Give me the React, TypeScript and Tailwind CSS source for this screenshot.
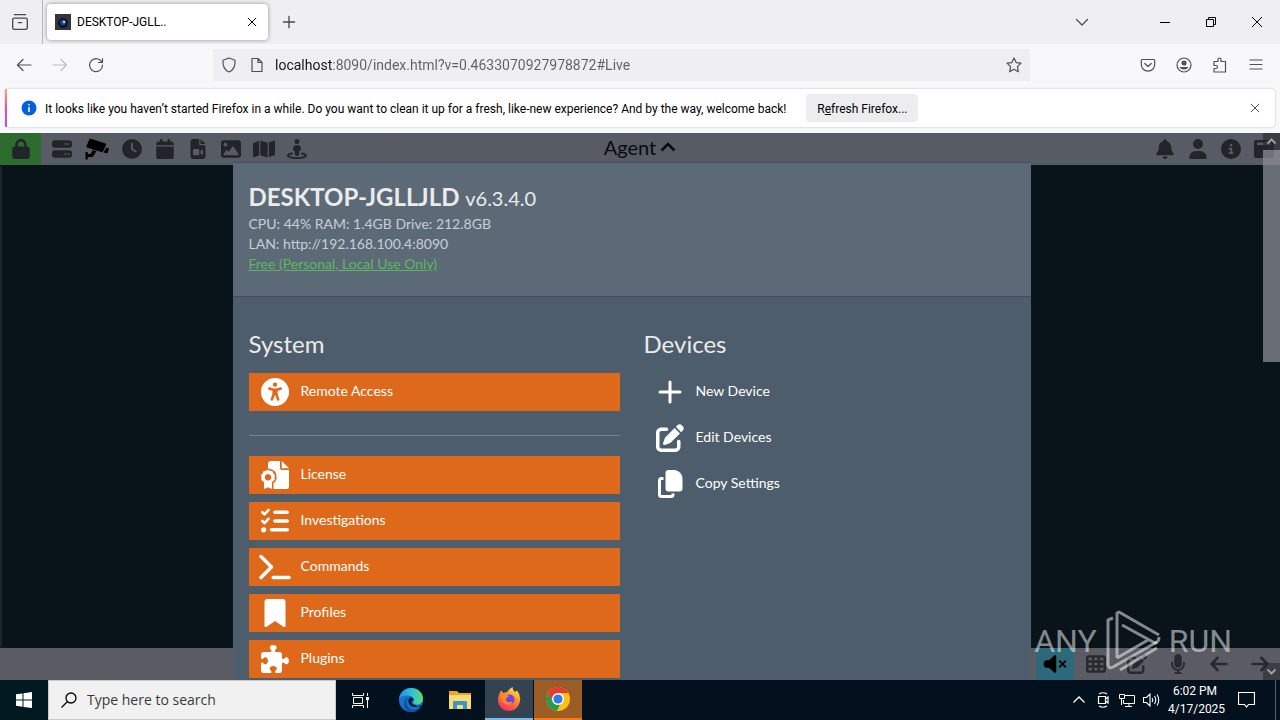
import type { ReactNode } from "react";
import type { IconType } from "react-icons";
import {
  FaArrowLeft,
  FaArrowRight,
  FaBell,
  FaBookmark,
  FaCalendar,
  FaCircleInfo,
  FaClock,
  FaFileVideo,
  FaImage,
  FaListCheck,
  FaLock,
  FaMap,
  FaMicrophone,
  FaPenToSquare,
  FaPuzzlePiece,
  FaServer,
  FaStreetView,
  FaTableCells,
  FaTerminal,
  FaUniversalAccess,
  FaUser,
  FaVolumeXmark,
} from "react-icons/fa6";

interface SvgProps {
  className?: string;
}

interface MenuItem {
  label: string;
  icon: IconType | ((props: SvgProps) => ReactNode);
}

function CctvIcon({ className }: SvgProps) {
  return (
    <svg viewBox="0 0 24 22" className={className} fill="currentColor">
      <path d="M4.500 1 Q5.500 .5 6.500 1 L20.500 5.500 Q21.500 6 21 7 L18 13.500 Q17.500 14.500 16.500 14 L2 9.500 Q1 9 1.500 8 Z" />
      <path d="M21.500 9.500 L24 10.500 L22.500 15.500 L18.500 14.500 Z" />
      <path d="M.5 14 h2.200 v2 h2.800 l2.400 -4 l3.600 1.200 l-3.800 5.800 h-5 v2.500 H.5 Z" />
    </svg>
  );
}

function WindowIcon({ className }: SvgProps) {
  return (
    <svg viewBox="0 0 20 18" className={className} fill="currentColor" fillRule="evenodd">
      <path d="M2 0 H18 a2 2 0 0 1 2 2 V16 a2 2 0 0 1 -2 2 H2 a2 2 0 0 1 -2 -2 V2 a2 2 0 0 1 2 -2 Z M3 2.500 V5 H17 V2.500 Z" />
    </svg>
  );
}

function PlusIcon({ className }: SvgProps) {
  return (
    <svg viewBox="0 0 28 28" className={className} stroke="currentColor" strokeWidth="3" strokeLinecap="round">
      <path d="M14 4 V24 M4 14 H24" />
    </svg>
  );
}

function CertificateIcon({ className }: SvgProps) {
  return (
    <svg viewBox="0 0 28 28" className={className} fill="currentColor" fillRule="evenodd">
      <path d="M7 7.500 V3 a3 3 0 0 1 3 -3 H19 V7 a2 2 0 0 0 2 2 H28 V25.500 a2.500 2.500 0 0 1 -2.500 2.500 H12.500 V22 Q16 20 15.500 16 Q15.500 9 9.500 8 Z M20.800 0 L28 7.200 H20.800 Z" />
      <path d="M7 8.800 L9.200 9.800 L11.600 10.200 L12.400 12.400 L14 14.200 L13.500 16.500 L13.800 18.900 L11.800 20.200 L11 21.500 V28 L7 26.200 L3 28 V21.500 L2.200 20.200 L.2 18.900 L.5 16.500 L0 14.200 L1.600 12.400 L2.400 10.200 L4.800 9.800 Z M7 13 a3.300 3.300 0 1 0 .01 0 Z" />
    </svg>
  );
}

function CopyIcon({ className }: SvgProps) {
  return (
    <svg viewBox="0 0 28 28" className={className} fill="currentColor">
      <path d="M12.500 0 H19 Q26.500 2 26.500 9 V18.500 a3 3 0 0 1 -3 3 H12.500 a3 3 0 0 1 -3 -3 V3 a3 3 0 0 1 3 -3 Z" />
      <path
        d="M7.500 8.500 H5.500 a2 2 0 0 0 -2 2 V24.500 a2 2 0 0 0 2 2 H15 a2 2 0 0 0 2 -2 V23.500"
        fill="none"
        stroke="currentColor"
        strokeWidth="3"
      />
    </svg>
  );
}

function LineIcon({ className, children }: SvgProps & { children: ReactNode }) {
  return (
    <svg
      viewBox="0 0 16 16"
      className={className}
      fill="none"
      stroke="currentColor"
      strokeWidth="1.200"
      strokeLinecap="round"
      strokeLinejoin="round"
    >
      {children}
    </svg>
  );
}

function CloseIcon({ className }: SvgProps) {
  return (
    <LineIcon className={className}>
      <path d="M4.200 4.200 L11.800 11.800 M11.800 4.200 L4.200 11.800" strokeWidth="1" />
    </LineIcon>
  );
}

function TabBar() {
  return (
    <div className="flex h-11 shrink-0 items-center bg-[#efeef3] text-[#4a4a52]">
      <button aria-label="Recent browsing" className="flex h-full w-[43px] items-center justify-center border-r border-[#b9b9bf] pr-0.5">
        <LineIcon className="size-[18px]">
          <path d="M3 1.500 H13 M3 4.500 H13 a1.500 1.500 0 0 1 1.500 1.500 V13 a1.500 1.500 0 0 1 -1.500 1.500 H3 A1.500 1.500 0 0 1 1.500 13 V6 A1.500 1.500 0 0 1 3 4.500 Z M6.500 8.500 H9.500" />
        </LineIcon>
      </button>
      <div className="ml-1 flex h-9 w-[221px] items-center rounded bg-white px-2 text-black shadow-[0_0_4px_rgba(0,0,0,0.4)]">
        <svg viewBox="0 0 16 16" className="size-4">
          <rect width="16" height="16" fill="#34343a" />
          <circle cx="8" cy="9" r="5" fill="#10131f" />
          <circle cx="8" cy="8.500" r="3" fill="#1c3f8f" />
          <circle cx="9" cy="8" r="1.200" fill="#b8d4ff" />
        </svg>
        <span className="ml-1.5 flex-1 font-[Roboto] text-xs">DESKTOP-JGLL..</span>
        <button aria-label="Close tab">
          <CloseIcon className="size-4" />
        </button>
      </div>
      <button aria-label="New tab" className="ml-3">
        <LineIcon className="size-[18px]">
          <path d="M8 3 V13 M3 8 H13" />
        </LineIcon>
      </button>
      <button aria-label="List all tabs" className="ml-auto">
        <LineIcon className="size-4">
          <path d="M2.500 5.500 L8 11 L13.500 5.500" />
        </LineIcon>
      </button>
      <div className="ml-13 flex text-black">
        <button aria-label="Minimize" className="flex w-[46px] justify-center">
          <svg viewBox="0 0 10 10" className="size-2.5" stroke="currentColor">
            <path d="M0 5.500 H10" />
          </svg>
        </button>
        <button aria-label="Restore" className="flex w-[46px] justify-center">
          <svg viewBox="0 0 10 10" className="size-2.5" fill="none" stroke="currentColor">
            <path d="M.5 2.500 H7.500 V9.500 H.5 Z M2.500 2.500 V.5 H9.500 V7.500 H7.500" />
          </svg>
        </button>
        <button aria-label="Close window" className="flex w-[46px] justify-center">
          <svg viewBox="0 0 10 10" className="size-2.5" stroke="currentColor">
            <path d="M0 0 L10 10 M10 0 L0 10" />
          </svg>
        </button>
      </div>
    </div>
  );
}

function NavBar() {
  return (
    <div className="flex h-[42px] shrink-0 items-center bg-[#f8f8fb] pr-4 text-[#4f4f57]">
      <div className="flex w-[213px] gap-5 pl-4">
        <button aria-label="Back">
          <LineIcon className="size-4">
            <path d="M15 8 H1.500 M7 2.500 L1.500 8 L7 13.500" />
          </LineIcon>
        </button>
        <button aria-label="Forward" disabled className="text-[#bdbdc2]">
          <LineIcon className="size-4">
            <path d="M1 8 H14.500 M9 2.500 L14.500 8 L9 13.500" />
          </LineIcon>
        </button>
        <button aria-label="Reload">
          <LineIcon className="size-4">
            <path d="M14.500 8 A6.500 6.500 0 1 1 12 3 L14.500 5.500 M14.500 1.500 V5.500 H10.500" />
          </LineIcon>
        </button>
      </div>
      <div className="flex h-8 w-[817px] items-center bg-[#efeff3] px-2">
        <LineIcon className="size-4">
          <path d="M8 1 L14 3.200 C14.500 9 12.500 13 8 15 C3.500 13 1.500 9 2 3.200 Z" />
        </LineIcon>
        <LineIcon className="ml-3 size-4">
          <path d="M3 1.500 H9 L13 5.500 V14.500 H3 Z M9 1.500 V5.500 H13" />
        </LineIcon>
        {/* the host is darker than the rest of the address */}
        <input
          aria-label="Address"
          readOnly
          value="localhost:8090/index.html?v=0.4633070927978872#Live"
          className="ml-2.5 min-w-0 flex-1 bg-[linear-gradient(to_right,#15141a_57px,#5f5f6a_57px)] bg-clip-text font-[Roboto] text-sm text-transparent outline-none"
        />
        <button aria-label="Bookmark this page">
          <LineIcon className="size-4">
            <path d="M8 1 L10.200 5.600 L15 6.200 L11.500 9.700 L12.300 14.800 L8 12.300 L3.700 14.800 L4.500 9.700 L1 6.200 L5.800 5.600 Z" />
          </LineIcon>
        </button>
      </div>
      <div className="flex flex-1 justify-end gap-5">
        <button aria-label="Save to Pocket">
          <LineIcon className="size-4">
            <path d="M2 2.500 H14 L14.700 3.500 V7.500 A6.700 6.700 0 0 1 1.300 7.500 V3.500 Z M4.800 6.500 L8 9.500 L11.200 6.500" />
          </LineIcon>
        </button>
        <button aria-label="Account">
          <LineIcon className="size-4">
            <circle cx="8" cy="8" r="7" />
            <circle cx="8" cy="6" r="2" fill="currentColor" />
            <path d="M4.500 10.500 H11.500 Q8 13.500 4.500 10.500 Z" fill="currentColor" />
          </LineIcon>
        </button>
        <button aria-label="Extensions">
          <LineIcon className="size-4">
            <path d="M2 4.500 H6 V2.500 a1.500 1.500 0 0 1 3 0 V4.500 H13.500 V15 H2 V11.500 H4 a1.500 1.500 0 0 0 0 -3 H2 Z" />
          </LineIcon>
        </button>
        <button aria-label="Menu">
          <LineIcon className="size-4">
            <path d="M2 3 H14 M2 7.500 H14 M2 12 H14" />
          </LineIcon>
        </button>
      </div>
    </div>
  );
}

function Notification() {
  return (
    <div className="h-[47px] shrink-0 bg-[#f8f8fb] px-[5px] pt-[3px]">
      <div className="flex h-[38px] items-center rounded bg-white pr-3 text-black shadow-[0_0_2px_rgba(0,0,0,0.3)]">
        <span className="h-full w-0.5 bg-linear-to-b from-[#ffa26b] via-[#e0529c] to-[#9059ff]" />
        <svg viewBox="0 0 16 16" className="ml-3.5 size-4">
          <circle cx="8" cy="8" r="7.500" fill="#0560df" />
          <path d="M8 7 V12 M8 4 V5.500" stroke="#fff" strokeWidth="1.500" />
        </svg>
        <p className="ml-2 pt-0.5 font-[Roboto] text-xs whitespace-nowrap">
          It looks like you haven’t started Firefox in a while. Do you want to clean it up for a fresh, like-new
          experience? And by the way, welcome back!
        </p>
        <button className="ml-5 h-7 w-28 rounded bg-[#ededf0] pt-0.5 font-[Roboto] text-xs">
          R<u>e</u>fresh Firefox...
        </button>
        <button aria-label="Dismiss" className="ml-auto text-[#4f4f57]">
          <CloseIcon className="size-4" />
        </button>
      </div>
    </div>
  );
}

const viewTabs = [
  { label: "Devices", icon: FaServer },
  { label: "Live", icon: CctvIcon, active: true },
  { label: "Timeline", icon: FaClock },
  { label: "Calendar", icon: FaCalendar },
  { label: "Recordings", icon: FaFileVideo },
  { label: "Photos", icon: FaImage },
  { label: "Map", icon: FaMap },
  { label: "Floor plan", icon: FaStreetView },
];

const statusButtons = [
  { label: "Notifications", icon: FaBell },
  { label: "Profile", icon: FaUser },
  { label: "Information", icon: FaCircleInfo },
  { label: "Windows", icon: WindowIcon },
];

const liveControls = [
  { label: "Layout", icon: FaTableCells },
  { label: "Edit", icon: FaPenToSquare },
  { label: "Talk", icon: FaMicrophone },
  { label: "Previous", icon: FaArrowLeft },
  { label: "Next", icon: FaArrowRight },
];

function AppHeader() {
  return (
    <header className="flex h-8 shrink-0 items-center justify-between bg-[#575b64] text-[#212529]">
      <nav className="flex h-full flex-1 items-center">
        <button aria-label="Lock" className="flex h-full w-[41px] items-center justify-center bg-[#2c6a2e]">
          <FaLock className="size-5" />
        </button>
        <div className="ml-2.5 flex items-center gap-[11px]">
          {viewTabs.map(({ label, icon: Icon, active }) => (
            <button
              key={label}
              aria-label={label}
              className={active ? "flex w-[26px] justify-center text-black" : "flex w-[22px] justify-center"}
            >
              <Icon className={active ? "h-[22px] w-6" : "h-5 w-[22px]"} />
            </button>
          ))}
        </div>
      </nav>
      <button className="flex items-center gap-1 pb-1 pl-1.5 font-[Lato] text-xl leading-none text-[#080b10]">
        Agent
        <svg viewBox="0 0 16 10" className="h-2.5 w-4" fill="none" stroke="currentColor" strokeWidth="2.500">
          <path d="M1.500 8.500 L8 2 L14.500 8.500" />
        </svg>
      </button>
      <div className="flex flex-1 justify-end gap-[13px] pr-1.5">
        {statusButtons.map(({ label, icon: Icon }) => (
          <button key={label} aria-label={label}>
            <Icon className="size-5" />
          </button>
        ))}
      </div>
    </header>
  );
}

function LiveToolbar() {
  return (
    <footer className="flex h-8 shrink-0 items-center justify-end bg-[#5b5c63] text-[#26292e]">
      <button aria-label="Unmute" className="flex h-full w-[38px] items-center justify-center bg-[#2c6a7b] text-black">
        <FaVolumeXmark className="h-5 w-6" />
      </button>
      <div className="flex gap-[21px] pr-2.5 pl-3">
        {liveControls.map(({ label, icon: Icon }) => (
          <button key={label} aria-label={label}>
            <Icon className="size-5" />
          </button>
        ))}
      </div>
    </footer>
  );
}

const systemItems: MenuItem[] = [
  { label: "License", icon: CertificateIcon },
  { label: "Investigations", icon: FaListCheck },
  { label: "Commands", icon: FaTerminal },
  { label: "Profiles", icon: FaBookmark },
  { label: "Plugins", icon: FaPuzzlePiece },
];

const deviceItems: MenuItem[] = [
  { label: "New Device", icon: PlusIcon },
  { label: "Edit Devices", icon: FaPenToSquare },
  { label: "Copy Settings", icon: CopyIcon },
];

function MenuButton({ item, filled }: { item: MenuItem; filled?: boolean }) {
  const Icon = item.icon;
  return (
    <button
      className={
        filled
          ? "flex h-[38px] w-full shrink-0 items-center bg-[#df691a] text-left text-white"
          : "flex h-[38px] w-full shrink-0 items-center text-left text-white"
      }
    >
      <span className="flex w-[52px] justify-center">
        <Icon className="h-7 w-8" />
      </span>
      <span className="pb-0.5 text-sm">{item.label}</span>
    </button>
  );
}

function AgentDialog() {
  return (
    <div role="dialog" aria-label="Agent" className="h-full w-[798px] overflow-hidden bg-[#4e5d6c] font-[Lato] text-[#ebebeb]">
      <div className="h-[135px] border-y border-[#43515e] bg-[#5c6a78] px-4 pt-[18px]">
        <h1 className="mb-px text-2xl leading-8 font-bold">
          DESKTOP-JGLLJLD <span className="text-xl font-normal">v6.3.4.0</span>
        </h1>
        <div className="text-sm leading-5 text-[#c8ced4]">
          <p>CPU: 44% RAM: 1.4GB Drive: 212.8GB</p>
          <p>LAN: http://192.168.100.4:8090</p>
          <a href="#license" className="text-[#5cb85c] underline">
            Free (Personal, Local Use Only)
          </a>
        </div>
      </div>
      <div className="grid grid-cols-2 gap-6 px-4 pt-[31px]">
        <section>
          <h2 className="text-2xl leading-8">System</h2>
          <div className="mt-[13px]">
            <MenuButton item={{ label: "Remote Access", icon: FaUniversalAccess }} filled />
          </div>
          <hr className="mt-6 mb-5 border-[#74818e]" />
          <div className="flex flex-col gap-2">
            {systemItems.map((item) => (
              <MenuButton key={item.label} item={item} filled />
            ))}
          </div>
        </section>
        <section>
          <h2 className="text-2xl leading-8">Devices</h2>
          <div className="mt-[13px] flex flex-col gap-2">
            {deviceItems.map((item) => (
              <MenuButton key={item.label} item={item} />
            ))}
          </div>
        </section>
      </div>
    </div>
  );
}

function Scrollbar() {
  return (
    <div className="flex w-[17px] flex-col text-[#9a9da1]">
      <svg viewBox="0 0 17 17" className="size-[17px] bg-[#25282d]/60" fill="none" stroke="currentColor" strokeWidth="2">
        <path d="M4.500 10.500 L8.500 6.500 L12.500 10.500" />
      </svg>
      <div className="h-[212px] bg-[#8a8c96]/75" />
      <svg viewBox="0 0 17 17" className="mt-auto size-[17px] bg-[#25282d]/60" fill="none" stroke="currentColor" strokeWidth="2">
        <path d="M4.500 6.500 L8.500 10.500 L12.500 6.500" />
      </svg>
    </div>
  );
}

function Watermark() {
  return (
    <div className="absolute right-12 bottom-2 flex items-center gap-2 font-[Roboto] text-[32px] text-white/50">
      <span>ANY</span>
      <svg viewBox="0 0 56 62" className="h-[62px] w-14" fill="none" stroke="currentColor" strokeWidth="3" strokeLinejoin="round">
        <path d="M8 8 L3 10 V55 Q4 59 8 57 L52 32" />
        <path d="M12 48 V3 L14 2 L54 25 M17 15 L50 33 Q54 32 54 27 M12 48 L43 30 M15 60 L52 38" />
      </svg>
      <span>RUN</span>
    </div>
  );
}

function EdgeLogo() {
  return (
    <svg viewBox="0 0 24 24" className="size-6">
      <defs>
        <linearGradient id="edge-top" x1="0" y1="0.500" x2="1" y2="0.500">
          <stop offset="0" stopColor="#1b8fe0" />
          <stop offset="0.500" stopColor="#2fc0d8" />
          <stop offset="1" stopColor="#5fdc72" />
        </linearGradient>
      </defs>
      <circle cx="12" cy="12" r="12" fill="#1672cc" />
      <path d="M0 11 C1 4 6 0 12 0 C19 0 24 5 24 10.500 C24 14.500 21 16.500 17.500 16.500 C15 16.500 13.500 15.500 14.500 14 C16 10.500 13 7.500 9 7.500 C5 7.500 1 9 0 11 Z" fill="url(#edge-top)" />
      <path d="M9.500 9.500 C7 12 7 17 10 20 C13 22.500 17 22 21.500 19 C19 23 15.500 24 12 24 C7 23 4.500 19 5 15 C5.300 12 7 10 9.500 9.500 Z" fill="#12509c" />
      <path d="M10.500 10 C8 13 10 18.500 15 19 C18 19.300 21 18 22.500 16.500 L21.500 19 C17 17.500 13 17 12.500 14 C12.500 12 15 13 14.500 11 C13.500 9.500 12 9 10.500 10 Z" fill="#061b2c" />
    </svg>
  );
}

function FolderLogo() {
  return (
    <svg viewBox="0 0 22 18" className="h-[18px] w-[22px]">
      <path d="M0 0 H8 L10 2 H22 V18 H0 Z" fill="#e9a52c" />
      <path d="M0 4 H22 V18 H0 Z" fill="#fbdc72" />
      <path d="M4 18 V11 a1 1 0 0 1 1 -1 H17 a1 1 0 0 1 1 1 V18 H14 V14 H8 V18 Z" fill="#3d95cf" />
    </svg>
  );
}

function FirefoxLogo() {
  return (
    <svg viewBox="0 0 24 24" className="size-6">
      <defs>
        <linearGradient id="fox-body" x1="0.800" y1="0" x2="0.300" y2="1">
          <stop offset="0" stopColor="#fff04a" />
          <stop offset="0.450" stopColor="#ff8d25" />
          <stop offset="1" stopColor="#f5286e" />
        </linearGradient>
      </defs>
      <path d="M4 3.500 L6.500 6 Q8 5 10 5.300 Q12 2 15.500 0 Q15.500 3 18 5 L20 3.500 Q24 8 23 14 C22 20 17.500 24 12 24 C6 24 1 19.500 1 13 C1 9 2.500 6.500 4 3.500 Z" fill="url(#fox-body)" />
      <circle cx="12.500" cy="12.500" r="5" fill="#7542e5" />
      <path d="M4 8 Q8 6 12 9 L9.500 11 Q8 13.500 10.500 15 Q13 15.500 15.500 14.500 Q14 18.500 10 17.500 C6 16.500 4 12 4 8 Z" fill="#ff8a20" />
    </svg>
  );
}

function ChromeLogo() {
  return (
    <svg viewBox="0 0 24 24" className="size-6">
      <circle cx="12" cy="12" r="12" fill="#fbc116" />
      <path d="M1.600 6 A12 12 0 0 1 22.400 6 H12 L7 15 Z" fill="#e33b2e" />
      <path d="M1.600 6 L6.800 15 A6 6 0 0 0 14 17.500 L10.800 24 A12 12 0 0 1 1.600 6 Z" fill="#269c4c" />
      <circle cx="12" cy="12" r="6" fill="#fff" />
      <circle cx="12" cy="12" r="4.600" fill="#2f7de9" />
    </svg>
  );
}

function Taskbar() {
  return (
    <div className="flex h-10 shrink-0 items-center bg-[#03101e] text-white">
      <button aria-label="Start" className="flex h-full w-12 items-center justify-center bg-[#021922]">
        <svg viewBox="0 0 16 16" className="size-4" fill="currentColor">
          <path d="M0 2.300 L6.500 1.400 V7.600 H0 Z M7.500 1.200 L16 0 V7.600 H7.500 Z M0 8.500 H6.500 V14.700 L0 13.800 Z M7.500 8.500 H16 V16 L7.500 14.900 Z" />
        </svg>
      </button>
      <label className="flex h-full w-72 items-center border border-[#c9c9c9] bg-[#f1f1f1] px-3 text-black">
        <svg viewBox="0 0 16 16" className="size-4 shrink-0" fill="none" stroke="currentColor" strokeWidth="1.300">
          <circle cx="10" cy="6" r="5" />
          <path d="M6.500 9.500 L.5 15.500" />
        </svg>
        <input
          aria-label="Search"
          placeholder="Type here to search"
          className="ml-2.5 min-w-0 flex-1 bg-transparent text-sm outline-none placeholder:text-[#3a3a3a]"
        />
      </label>
      <button aria-label="Task view" className="flex h-full w-12 items-center justify-center">
        <svg viewBox="0 0 17 17" className="size-[17px]" fill="none" stroke="currentColor">
          <path d="M.5 1 V3.500 H11.500 V1 M.5 16 V13.500 H11.500 V16 M1.500 5.500 H10.500 V11.500 H1.500 Z M15.500 1 V4 M15.500 8 V16" />
          <path d="M14 5 H17 V8 H14 Z" fill="currentColor" stroke="none" />
        </svg>
      </button>
      <button aria-label="Edge" className="ml-0.5 flex h-full w-[50px] items-center justify-center">
        <EdgeLogo />
      </button>
      <button aria-label="File Explorer" className="flex h-full w-12 items-center justify-center">
        <FolderLogo />
      </button>
      <button aria-label="Firefox" className="ml-px flex h-full w-12 items-center justify-center border-b-2 border-[#76b9ed] bg-[#33434f]">
        <FirefoxLogo />
      </button>
      <button aria-label="Chrome" className="ml-px flex h-full w-12 items-center justify-center border-b-2 border-[#ff7a0a] bg-[#9b5c26]">
        <ChromeLogo />
      </button>
      <div className="ml-auto flex items-center gap-2">
        <svg viewBox="0 0 16 16" className="size-4" fill="none" stroke="currentColor" strokeWidth="1.300">
          <path d="M2.500 10.500 L8 5 L13.500 10.500" />
        </svg>
        <svg viewBox="0 0 16 16" className="size-4" fill="none" stroke="currentColor" strokeWidth="1.200">
          <path d="M3.500 4.500 H10.500 V11.500 H3.500 Z M10.500 7 L13 5 V11 L10.500 9 M4 2 Q8 -.5 12 2 M4 14 Q8 16.500 12 14" />
        </svg>
        <svg viewBox="0 0 16 16" className="size-4" fill="none" stroke="currentColor">
          <path d="M5.500 3.500 H15.500 V11.500 H4.500 V8 M.5 2.500 H5.500 V6.500 H.5 Z M2.500 6.500 V13 M10 11.500 V14.500 M6 14.500 H13" />
        </svg>
        <svg viewBox="0 0 17 16" className="h-4 w-[17px]" fill="none" stroke="currentColor" strokeWidth="1.100">
          <path d="M.5 5.500 H3.500 L7 2 V14 L3.500 10.500 H.5 Z M9 6 Q10.500 8 9 10 M11.500 4 Q14 8 11.500 12 M14 2.500 Q17.500 8 14 13.500" />
        </svg>
        <time className="w-[54px] text-center font-[Roboto] text-xs leading-[18px] whitespace-nowrap">
          6:02 PM
          <br />
          4/17/2025
        </time>
      </div>
      <button aria-label="Action center" className="ml-4 flex h-full w-[38px] items-center border-r border-[#56606a]">
        <svg viewBox="0 0 17 16" className="h-4 w-[17px]" fill="none" stroke="currentColor" strokeWidth="1.200">
          <path d="M.5 .5 H16.500 V12.500 H10.500 L8.500 15 L6.500 12.500 H.5 Z" />
        </svg>
      </button>
      <span className="w-1" />
    </div>
  );
}

export default function App() {
  return (
    <div className="flex h-screen flex-col overflow-hidden font-['Open_Sans',sans-serif]">
      <TabBar />
      <NavBar />
      <Notification />
      <main className="relative flex min-h-0 flex-1 flex-col bg-[#08131a]">
        <AppHeader />
        <div className="flex-1 rounded border-l-2 border-[#1b262d] bg-[#08131a]" />
        <LiveToolbar />
        <div className="absolute inset-0 flex">
          <div className="flex min-w-0 flex-1 justify-center pt-[29px]">
            <AgentDialog />
          </div>
          <Scrollbar />
        </div>
        <Watermark />
      </main>
      <Taskbar />
    </div>
  );
}
